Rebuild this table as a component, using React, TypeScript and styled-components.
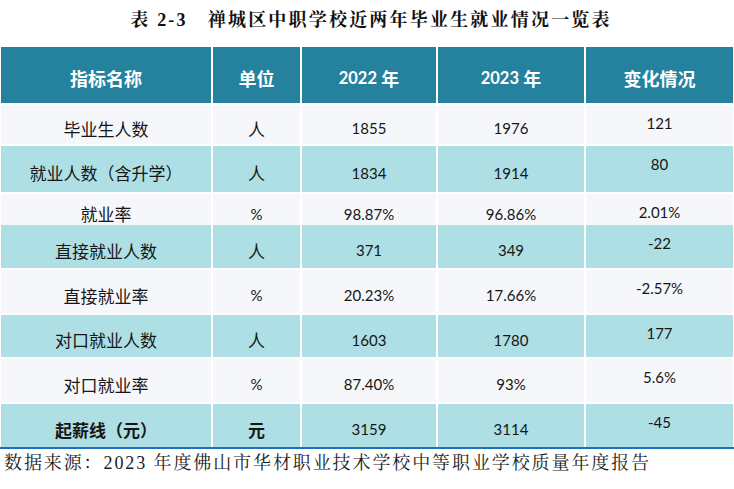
import React from "react";
import styled, { createGlobalStyle } from "styled-components";

const GlobalStyle = createGlobalStyle`
  html, body {
    margin: 0;
    padding: 0;
    background: #ffffff;
  }
  body {
    font-family: Lato, "Noto Sans CJK SC", sans-serif;
  }
`;

type Tone = "head" | "light" | "teal";

const rows: {
  name: string;
  unit: string;
  y2022: string;
  y2023: string;
  change: string;
  h: number;
  bold?: boolean;
}[] = [
  { name: "毕业生人数", unit: "人", y2022: "1855", y2023: "1976", change: "121", h: 39 },
  { name: "就业人数（含升学）", unit: "人", y2022: "1834", y2023: "1914", change: "80", h: 46 },
  { name: "就业率", unit: "%", y2022: "98.87%", y2023: "96.86%", change: "2.01%", h: 29 },
  { name: "直接就业人数", unit: "人", y2022: "371", y2023: "349", change: "-22", h: 43 },
  { name: "直接就业率", unit: "%", y2022: "20.23%", y2023: "17.66%", change: "-2.57%", h: 43 },
  { name: "对口就业人数", unit: "人", y2022: "1603", y2023: "1780", change: "177", h: 42 },
  { name: "对口就业率", unit: "%", y2022: "87.40%", y2023: "93%", change: "5.6%", h: 43 },
  { name: "起薪线（元）", unit: "元", y2022: "3159", y2023: "3114", change: "-45", h: 43, bold: true },
];

const App = () => {
  return (
    <>
      <GlobalStyle />
      <Page>
        <Title>
          表 2-3<TitleGap />禅城区中职学校近两年毕业生就业情况一览表
        </Title>

        <Table>
          <Row $tone="head" $h={56}>
            <HeadCell>指标名称</HeadCell>
            <HeadCell>单位</HeadCell>
            <HeadCell>
              <Year>2022</Year>&nbsp;年
            </HeadCell>
            <HeadCell>
              <Year>2023</Year>&nbsp;年
            </HeadCell>
            <HeadCell>变化情况</HeadCell>
          </Row>

          {rows.map((r, i) => (
            <Row key={r.name} $tone={i % 2 === 0 ? "light" : "teal"} $h={r.h}>
              <Cell $cjk $bold={r.bold}>{r.name}</Cell>
              <Cell $cjk={r.unit !== "%"} $bold={r.bold}>{r.unit}</Cell>
              <Cell>{r.y2022}</Cell>
              <Cell>{r.y2023}</Cell>
              <ChangeCell>{r.change}</ChangeCell>
            </Row>
          ))}
        </Table>
        <BottomRule />

        <Source>数据来源：2023 年度佛山市华材职业技术学校中等职业学校质量年度报告</Source>
      </Page>
    </>
  );
};

const Page = styled.div`
  width: 734px;
  height: 489px;
  overflow: hidden;
  background: #fff;
`;

const Title = styled.div`
  height: 40px;
  line-height: 40px;
  margin-bottom: 7px;
  text-align: center;
  padding-left: 8px;
  font-family: "Liberation Serif", "Noto Serif CJK SC", "Noto Sans CJK SC", serif;
  font-weight: 700;
  font-size: 18px;
  letter-spacing: 2.2px;
  color: #111;
`;

const TitleGap = styled.span`
  display: inline-block;
  width: 20px;
`;

const Table = styled.div`
  display: flex;
  flex-direction: column;
  gap: 2px;
  padding-left: 1px;
`;

const toneBg: Record<Tone, string> = {
  head: "#25829e",
  light: "#f6f7fb",
  teal: "#addfe4",
};

const Row = styled.div<{ $tone: Tone; $h: number }>`
  display: grid;
  grid-template-columns: 210px 87px 134px 146px 147px;
  column-gap: 2px;
  height: ${(p) => p.$h}px;

  & > div {
    background: ${(p) => toneBg[p.$tone]};
  }
`;

const HeadCell = styled.div`
  display: flex;
  align-items: center;
  justify-content: center;
  padding-top: 6px;
  box-sizing: border-box;
  color: #ffffff;
  font-weight: 700;
  font-size: 18px;
  font-family: Lato, "Noto Sans CJK SC", sans-serif;
`;

const Year = styled.span`
  font-size: 16.5px;
`;

const Cell = styled.div<{ $cjk?: boolean; $bold?: boolean }>`
  display: flex;
  align-items: center;
  justify-content: center;
  padding-top: 7px;
  box-sizing: border-box;
  color: #161616;
  font-size: ${(p) => (p.$cjk ? "17px" : "15px")};
  font-weight: ${(p) => (p.$bold ? 700 : 400)};
  white-space: nowrap;
`;

const ChangeCell = styled.div`
  display: flex;
  justify-content: center;
  align-items: flex-start;
  padding-top: 8px;
  box-sizing: border-box;
  line-height: 20px;
  color: #161616;
  font-size: 15px;
`;

const BottomRule = styled.div`
  height: 2px;
  background: #1f6fc0;
`;

const Source = styled.div`
  padding-left: 4px;
  height: 28px;
  line-height: 28px;
  font-family: "Liberation Serif", "Noto Serif CJK SC", "Noto Sans CJK SC", serif;
  font-size: 18px;
  letter-spacing: 1.9px;
  color: #1b1b1b;
  white-space: nowrap;
`;

export default App;
